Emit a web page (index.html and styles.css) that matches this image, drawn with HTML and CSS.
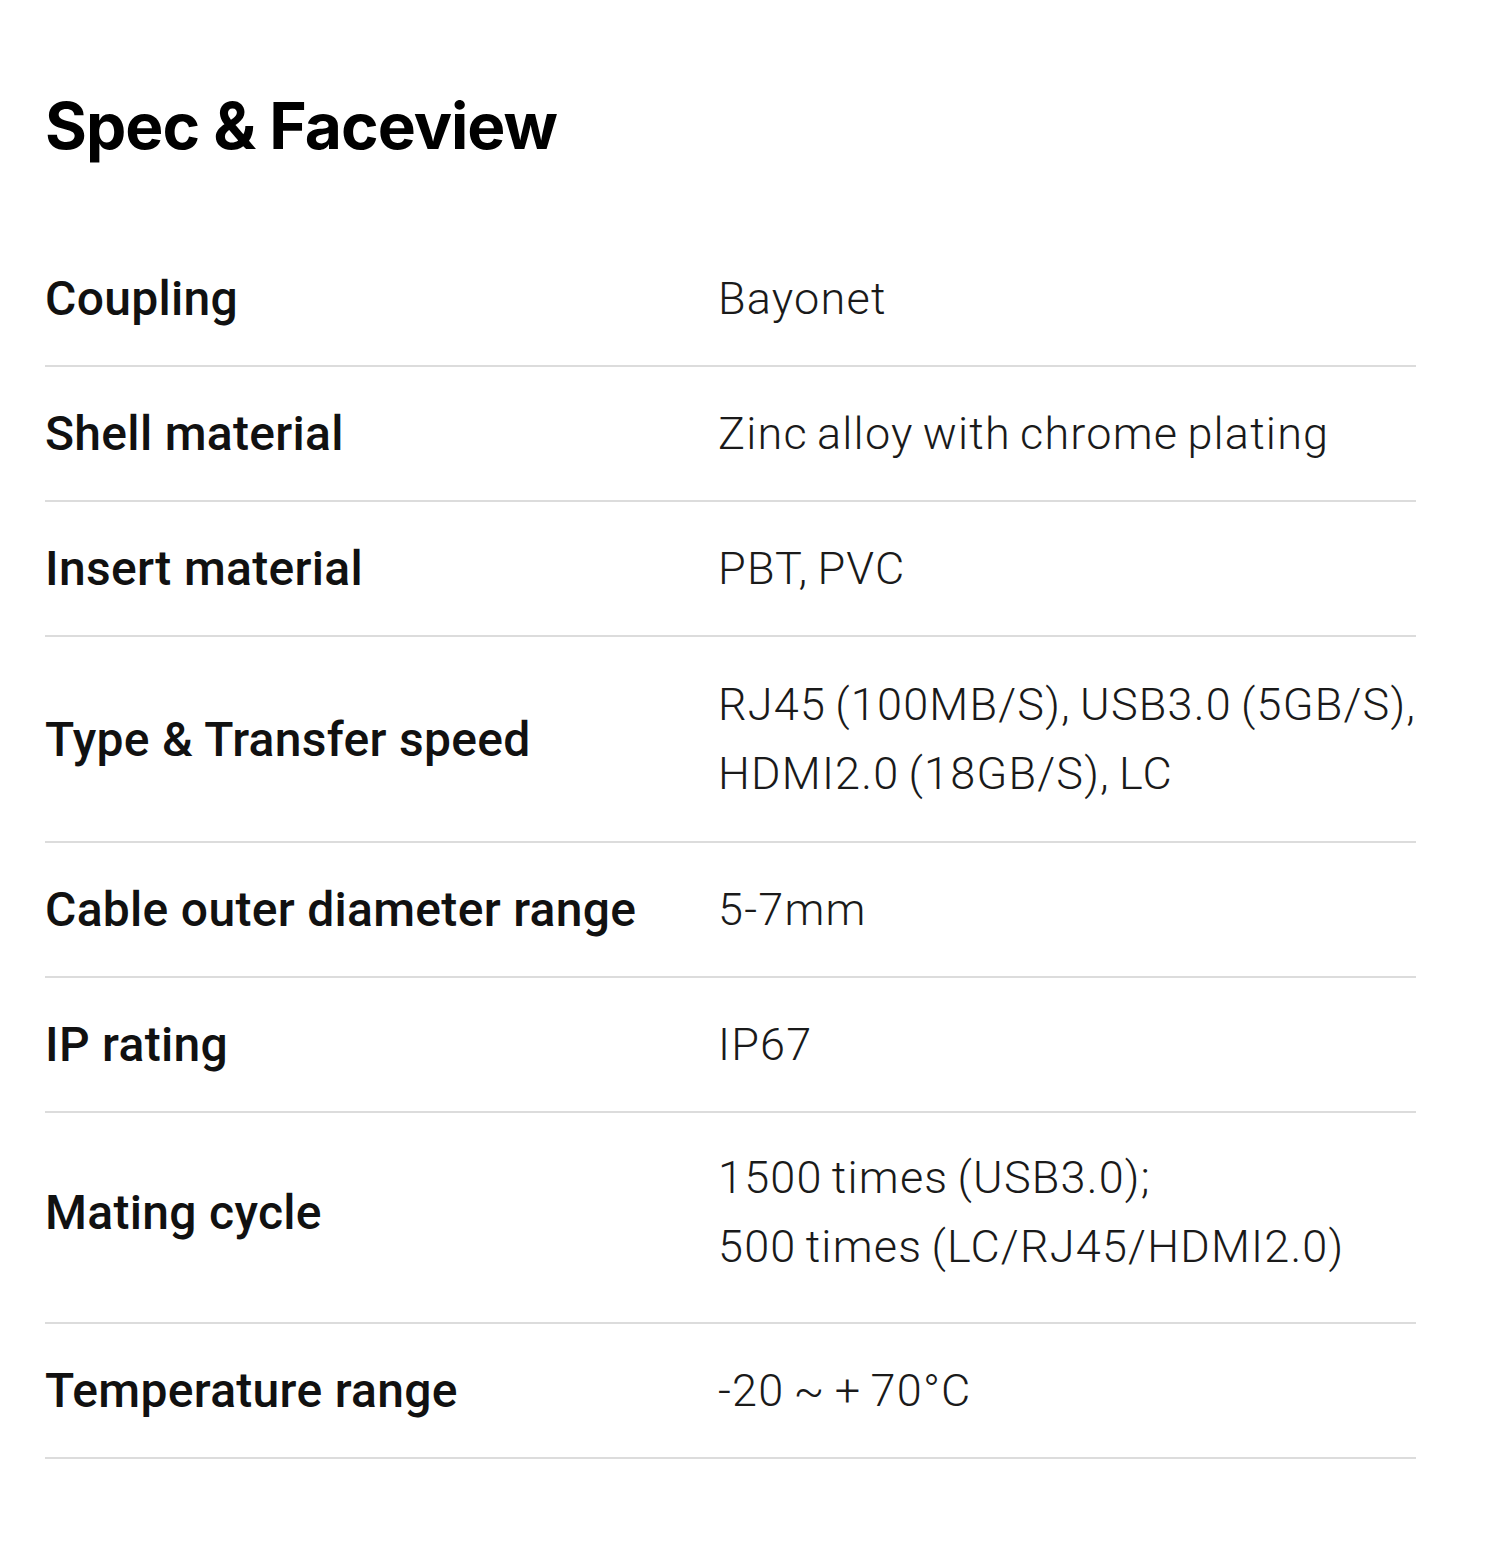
FILE: index.html
```html
<!DOCTYPE html>
<html lang="en">
<head>
<meta charset="utf-8">
<title>Spec &amp; Faceview</title>
<link rel="stylesheet" href="styles.css">
</head>
<body>
<section class="spec">
  <h2 class="spec-title">Spec &amp; Faceview</h2>
  <div class="spec-table">
    <div class="spec-row">
      <div class="spec-label">Coupling</div>
      <div class="spec-value">Bayonet</div>
    </div>
    <div class="spec-row">
      <div class="spec-label">Shell material</div>
      <div class="spec-value">Zinc alloy with chrome plating</div>
    </div>
    <div class="spec-row">
      <div class="spec-label">Insert material</div>
      <div class="spec-value">PBT, PVC</div>
    </div>
    <div class="spec-row spec-row--multi">
      <div class="spec-label">Type &amp; Transfer speed</div>
      <div class="spec-value">RJ45 (100MB/S), USB3.0 (5GB/S),<br>HDMI2.0 (18GB/S), LC</div>
    </div>
    <div class="spec-row">
      <div class="spec-label">Cable outer diameter range</div>
      <div class="spec-value">5-7mm</div>
    </div>
    <div class="spec-row">
      <div class="spec-label">IP rating</div>
      <div class="spec-value">IP67</div>
    </div>
    <div class="spec-row spec-row--multi spec-row--tall">
      <div class="spec-label">Mating cycle</div>
      <div class="spec-value">1500 times (USB3.0);<br>500 times (LC/RJ45/HDMI2.0)</div>
    </div>
    <div class="spec-row">
      <div class="spec-label">Temperature range</div>
      <div class="spec-value">-20 ~ + 70°C</div>
    </div>
  </div>
</section>
</body>
</html>
```

FILE: styles.css
```css
html, body {
  margin: 0;
  padding: 0;
  background: #ffffff;
}

.spec {
  width: 1371px;
  padding: 86px 0 0 45px;
}

.spec-title {
  margin: 0 0 66px 0;
  font-family: "Inter", "Roboto", sans-serif;
  font-weight: 700;
  font-size: 64px;
  line-height: 80px;
  letter-spacing: -1px;
  color: #000;
}

.spec-table {
  display: flex;
  flex-direction: column;
}

.spec-row {
  display: grid;
  grid-template-columns: 673px 1fr;
  align-items: center;
  padding: 33px 0;
  border-bottom: 2px solid #dcdcdc;
}

.spec-row--multi .spec-value {
  line-height: 69px;
}

.spec-row--tall {
  padding: 30px 0 41px;
}

.spec-label {
  font-family: "Roboto", "Liberation Sans", sans-serif;
  font-weight: 500;
  font-size: 48px;
  line-height: 67px;
  letter-spacing: 0.3px;
  color: #111;
}

.spec-value {
  font-family: "Roboto", "Liberation Sans", sans-serif;
  font-weight: 300;
  font-size: 45px;
  line-height: 67px;
  letter-spacing: 1.2px;
  word-spacing: -3px;
  white-space: nowrap;
  color: #1a1a1a;
}
```
